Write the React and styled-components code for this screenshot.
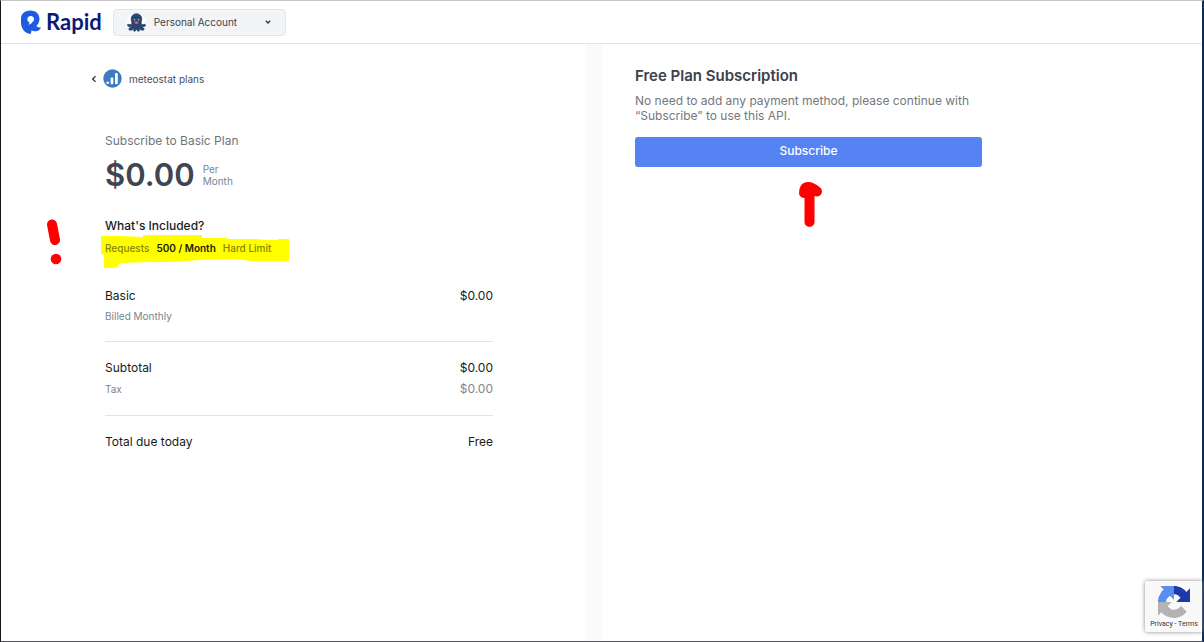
import React from "react";
import styled, { createGlobalStyle } from "styled-components";

const Global = createGlobalStyle`
  *, *::before, *::after { box-sizing: border-box; }
  body {
    margin: 0;
    background: #fff;
    color: #161b22;
    font-family: Inter, "Liberation Sans", sans-serif;
    font-size: 12px;
    line-height: 16px;
  }
  h1, h2, p, dl, dt, dd { margin: 0; padding: 0; font-size: inherit; font-weight: 400; }
  button { font: inherit; cursor: pointer; }
  a { color: inherit; text-decoration: none; }
`;

const Frame = styled.div`
  position: relative;
  display: flex;
  flex-direction: column;
  min-height: 100vh;
  border-style: solid;
  border-width: 1px 2px 1px 1px;
  border-color: #c6c6c6 #0b2c5c #57575a #17171a;
`;

const Header = styled.header`
  display: flex;
  align-items: center;
  gap: 11px;
  height: 43px;
  padding: 0 19px;
  border-bottom: 1px solid #e4e4e7;
`;

const Logo = styled.a`
  display: flex;
  align-items: center;
  gap: 4px;
  color: #0c1a75;
  font-family: Lato, sans-serif;
  font-size: 22px;
  line-height: 24px;
  font-weight: 700;
`;

const AccountButton = styled.button`
  display: flex;
  align-items: center;
  gap: 8px;
  width: 173px;
  height: 27px;
  padding: 0 13px;
  border: 1px solid #e2e4e8;
  border-radius: 4px;
  background: #f3f4f6;
  color: #3f4450;
  font-size: 10px;
  text-align: left;
`;

const AccountName = styled.span`
  flex: 1;
`;

const Columns = styled.main`
  flex: 1;
  display: grid;
  grid-template-columns: 39fr 16px 40fr;
`;

const Divider = styled.div`
  background: #fafafa;
`;

const Summary = styled.section`
  padding: 25px 20px 25px 104px;
`;

const SummaryBody = styled.div`
  max-width: 388px;
`;

const BackLink = styled.a`
  display: flex;
  align-items: center;
  gap: 6px;
  width: max-content;
  margin-left: -14px;
  color: #4a4f59;
  font-size: 10px;
`;

const BackLabel = styled.span`
  margin-left: 1px;
`;

const PlanName = styled.h1`
  margin-top: 45px;
  color: #70757d;
`;

const Price = styled.div`
  display: flex;
  align-items: center;
  gap: 8px;
  margin-top: 8px;
`;

const Amount = styled.strong`
  color: #40454f;
  font-size: 31px;
  line-height: 36px;
  font-weight: 600;
`;

const Period = styled.span`
  width: 40px;
  color: #7b8490;
  font-size: 10px;
  line-height: 12px;
`;

const IncludedTitle = styled.h2`
  margin-top: 25px;
  font-weight: 500;
`;

const Quota = styled.p`
  position: relative;
  isolation: isolate;
  display: flex;
  gap: 7px;
  width: max-content;
  margin-top: 6px;
  color: #85850a;
  font-size: 10px;
  font-weight: 500;
`;

const QuotaValue = styled.strong`
  color: #1c1c06;
  font-weight: 600;
`;

const Highlight = styled.svg`
  position: absolute;
  z-index: -1;
  left: -4px;
  top: -5px;
`;

const Exclamation = styled.svg`
  position: absolute;
  left: -60px;
  top: -21px;
`;

const Charges = styled.dl`
  display: flex;
  flex-direction: column;
  gap: 2px;
  padding: 16px 0;
  border-top: 1px solid ${(p) => (p.$first ? "transparent" : "#e4e4e7")};
  margin-top: ${(p) => (p.$first ? "13px" : "0")};
`;

const Charge = styled.div`
  display: flex;
  justify-content: space-between;
  line-height: ${(p) => (p.$tall ? "20px" : "18px")};
  padding-top: ${(p) => (p.$muted ? "0" : "1px")};
`;

const ChargeLabel = styled.dt`
  color: ${(p) => (p.$muted ? "#7b8490" : "inherit")};
  font-size: ${(p) => (p.$muted ? "10px" : "12px")};
`;

const ChargeValue = styled.dd`
  color: ${(p) => (p.$muted ? "#858585" : "inherit")};
`;

const Checkout = styled.section`
  padding: 23px 33px;
`;

const CheckoutBody = styled.div`
  position: relative;
  max-width: 347px;
`;

const CheckoutTitle = styled.h2`
  color: #3b404b;
  font-size: 15px;
  line-height: 18px;
  font-weight: 600;
`;

const CheckoutText = styled.p`
  margin-top: 8px;
  color: #74777c;
  line-height: 15px;
`;

const SubscribeButton = styled.button`
  display: block;
  width: 100%;
  height: 30px;
  margin-top: 14px;
  padding: 0 0 2px;
  border: 0;
  border-radius: 3px;
  background: #5683f3;
  color: #fff;
  font-weight: 500;
`;

const Arrow = styled.svg`
  position: absolute;
  left: 163px;
  top: 114px;
`;

const Recaptcha = styled.aside`
  position: absolute;
  right: 0;
  bottom: 9px;
  display: flex;
  flex-direction: column;
  align-items: center;
  width: 57px;
  height: 51px;
  padding: 5px 0 0 1px;
  border-radius: 2px 0 0 2px;
  background: #f9f9f9;
  box-shadow: 0 0 4px #888;
  color: #333;
  font-family: Roboto, sans-serif;
  font-size: 7px;
  line-height: 12px;
`;

function RapidMark() {
  return (
    <svg width="22" height="24" viewBox="0 0 22 24" aria-hidden="true">
      <path
        fill="#1d5be0"
        fillRule="evenodd"
        d="M10.500.5C16 .5 19.500 4 19.500 9c0 3-1.200 5.300-3.200 7 1.200 1 2.800 1.600 4.700 1.600-.8 2.300-2.800 3.700-5.300 3.700-1.800 0-3.200-.4-4.300-1 .2 1.200-.1 2.400-1 3.600C4.800 23.400 1 18.500 1 12.500V9C1 4 4.500.5 10.500.5Zm.2 5.500C8.700 6 7.300 7.300 7.300 9.200c0 1.600.9 2.700 2.400 3.100-.2.900-.7 1.600-1.400 2.100 2 .1 3.400-.6 4-2.300 1.100-.6 1.700-1.600 1.700-2.900C14 7.300 12.700 6 10.700 6Z"
      />
    </svg>
  );
}

function OctopusAvatar() {
  return (
    <svg width="19" height="19" viewBox="0 0 19 19" aria-hidden="true">
      <circle cx="9.500" cy="9.500" r="9.500" fill="#fff" />
      <path
        fill="#2b4570"
        stroke="#2b4570"
        strokeWidth="0.800"
        d="M9.500.8c-3.200 0-5.300 2.300-5.300 5.300 0 1.600.7 2.600.7 3.800 0 1.300-1 1.800-2.100 1.700-.9-.1-1.300-.6-2-.2-.6.500-.3 1.400.4 1.900.8.600 1.900.8 3 .5-.3.900-1.300 1.200-2 1.500-.6.400-.5 1.300.2 1.600 1.600.7 3.600-.2 4.600-1.700.1 1-.7 1.700-.5 2.400.2.800 1.300.9 1.900.3.500-.5.800-1.100 1.100-1.800.3.700.6 1.300 1.100 1.800.6.600 1.700.5 1.900-.3.200-.7-.6-1.400-.5-2.400 1 1.500 3 2.400 4.600 1.700.7-.3.800-1.200.2-1.600-.7-.3-1.700-.6-2-1.500 1.100.3 2.200.1 3-.5.7-.5 1-1.400.4-1.900-.7-.4-1.100.1-2 .2-1.100.1-2.100-.4-2.100-1.700 0-1.200.7-2.200.7-3.800 0-3-2.100-5.300-5.300-5.300Z"
      />
      <circle cx="7.500" cy="6.800" r="0.800" fill="#b9c7dc" />
      <circle cx="11.500" cy="6.800" r="0.800" fill="#b9c7dc" />
      <path fill="#e4606d" d="M7.500 8.400h4c0 1.500-.9 2.600-2 2.600s-2-1.100-2-2.600Z" />
    </svg>
  );
}

function ChevronDown() {
  return (
    <svg width="8" height="8" viewBox="0 0 8 8" aria-hidden="true">
      <path d="M1.800 2.800 4 5l2.200-2.200" fill="none" stroke="#2c303a" strokeWidth="1.300" />
    </svg>
  );
}

function ChevronLeft() {
  return (
    <svg width="6" height="8" viewBox="0 0 6 8" aria-hidden="true">
      <path d="M4.500 1.200 1.600 4l2.900 2.800" fill="none" stroke="#2c303a" strokeWidth="1.200" />
    </svg>
  );
}

function MeteostatIcon() {
  return (
    <svg width="19" height="19" viewBox="0 0 19 19" aria-hidden="true">
      <circle cx="9.500" cy="9.500" r="9.200" fill="#3d7abf" />
      <circle cx="4.700" cy="13.800" r="1.300" fill="#fff" />
      <rect x="7.600" y="8.500" width="2.700" height="6.700" rx="1" fill="#fff" />
      <rect x="12" y="4" width="2.800" height="11.200" rx="1" fill="#fff" />
    </svg>
  );
}

function RecaptchaLogo() {
  return (
    <svg width="32" height="32" viewBox="0 0 64 64" aria-hidden="true">
      <path
        fill="#1c3aa9"
        d="M64 31.955l-.033-1.370V4.687l-7.160 7.160C50.948 4.674 42.033.093 32.050.093c-10.400 0-19.622 4.960-25.458 12.640l11.736 11.860a15.550 15.550 0 0 1 4.754-5.334c2.050-1.600 4.952-2.906 8.968-2.906.485 0 .860.057 1.135.163 4.976.393 9.288 3.140 11.828 7.124l-8.307 8.307L64 31.953"
      />
      <path
        fill="#5a8df0"
        d="M31.862.094l-1.370.033H4.594l7.160 7.160C4.580 13.147 0 22.060 0 32.046c0 10.400 4.960 19.622 12.640 25.458L24.500 45.768a15.550 15.550 0 0 1-5.334-4.754c-1.600-2.050-2.906-4.952-2.906-8.968 0-.485.057-.860.163-1.135.393-4.976 3.140-9.288 7.124-11.828l8.307 8.307L31.860.095"
      />
      <path
        fill="#b3b3b3"
        d="M.001 32.045l.033 1.370v25.898l7.160-7.160c5.860 7.173 14.774 11.754 24.760 11.754 10.400 0 19.622-4.960 25.458-12.640l-11.736-11.860a15.550 15.550 0 0 1-4.754 5.334c-2.050 1.600-4.952 2.906-8.968 2.906-.485 0-.860-.057-1.135-.163-4.976-.393-9.288-3.140-11.828-7.124l8.307-8.307c-10.522.04-22.400.066-27.295-.005"
      />
    </svg>
  );
}

function ChargeRow({ label, value, labelMuted, valueMuted }) {
  return (
    <Charge $muted={labelMuted} $tall={valueMuted}>
      <ChargeLabel $muted={labelMuted}>{label}</ChargeLabel>
      {value && <ChargeValue $muted={valueMuted}>{value}</ChargeValue>}
    </Charge>
  );
}

export default function App() {
  return (
    <Frame>
      <Global />
      <Header>
        <Logo href="#">
          <RapidMark />
          Rapid
        </Logo>
        <AccountButton type="button">
          <OctopusAvatar />
          <AccountName>Personal Account</AccountName>
          <ChevronDown />
        </AccountButton>
      </Header>
      <Columns>
        <Summary>
          <SummaryBody>
            <BackLink href="#">
              <ChevronLeft />
              <MeteostatIcon />
              <BackLabel>meteostat plans</BackLabel>
            </BackLink>
            <PlanName>Subscribe to Basic Plan</PlanName>
            <Price>
              <Amount>$0.00</Amount>
              <Period>Per Month</Period>
            </Price>
            <IncludedTitle>What's Included?</IncludedTitle>
            <Quota>
              <Highlight width="189" height="34" viewBox="0 0 189 34" aria-hidden="true">
                <path
                  fill="#ff0"
                  d="M0 1h18l24 1V0h59v3h25v1h28l13 1h10V4h11v22h-37l-17-2h-8l-27 1-30 2H49l-30 1-3 4-3 1H3V19H0Z"
                />
              </Highlight>
              <Exclamation width="18" height="46" viewBox="0 0 18 46" aria-hidden="true">
                <path d="M7 5.500 10 21" stroke="#f00" strokeWidth="10" strokeLinecap="round" />
                <circle cx="11" cy="40" r="5.300" fill="#f00" />
              </Exclamation>
              <span>Requests</span>
              <QuotaValue>500 / Month</QuotaValue>
              <span>Hard Limit</span>
            </Quota>
            <Charges $first>
              <ChargeRow label="Basic" value="$0.00" />
              <ChargeRow label="Billed Monthly" labelMuted />
            </Charges>
            <Charges>
              <ChargeRow label="Subtotal" value="$0.00" />
              <ChargeRow label="Tax" value="$0.00" labelMuted valueMuted />
            </Charges>
            <Charges>
              <ChargeRow label="Total due today" value="Free" />
            </Charges>
          </SummaryBody>
        </Summary>
        <Divider />
        <Checkout>
          <CheckoutBody>
            <CheckoutTitle>Free Plan Subscription</CheckoutTitle>
            <CheckoutText>
              No need to add any payment method, please continue with “Subscribe” to use this API.
            </CheckoutText>
            <SubscribeButton type="button">Subscribe</SubscribeButton>
            <Arrow width="25" height="48" viewBox="0 0 25 48" aria-hidden="true">
              <path
                d="M6 12Q6 6 10 6 14 6 19 10.500M11.500 9V41"
                fill="none"
                stroke="#f00"
                strokeWidth="10"
                strokeLinecap="round"
                strokeLinejoin="round"
              />
            </Arrow>
          </CheckoutBody>
        </Checkout>
      </Columns>
      <Recaptcha>
        <RecaptchaLogo />
        <span>
          <a href="#">Privacy</a> - <a href="#">Terms</a>
        </span>
      </Recaptcha>
    </Frame>
  );
}
